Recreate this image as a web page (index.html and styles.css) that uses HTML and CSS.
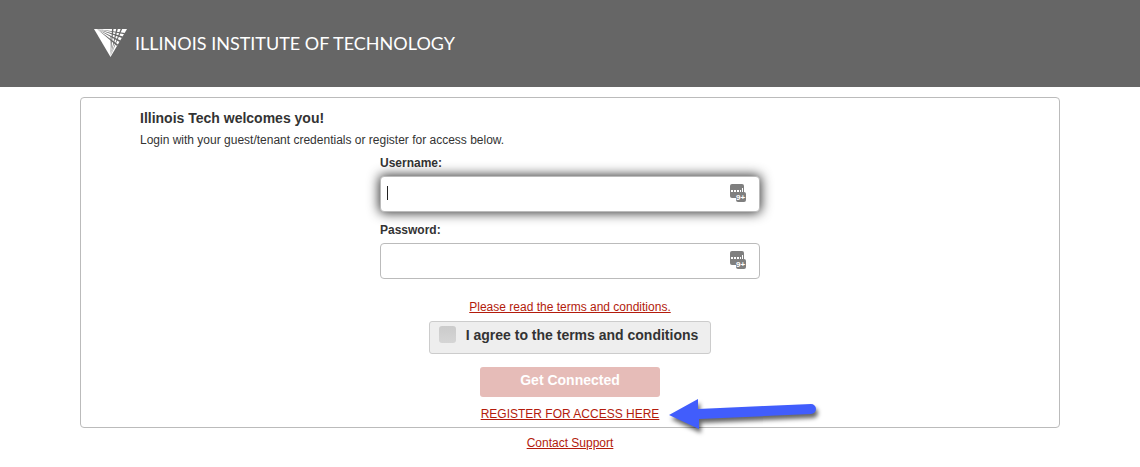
FILE: index.html
```
<!DOCTYPE html>
<html lang="en">
<head>
    <meta charset="UTF-8">
    <meta name="viewport" content="width=device-width, initial-scale=1.0">
    <title>Illinois Tech - Guest Login</title>
    <link rel="stylesheet" href="styles.css">
</head>
<body>
    <header class="header">
        <div class="logo">
            <svg class="logo-mark" width="34" height="28" viewBox="0 0 34 28" aria-hidden="true">
                <path fill="#fff" d="M0 0H33L16.500 28Z"/>
                <g fill="#666">
                    <path d="M3 0L31 4L30.500 5.200Z"/>
                    <path d="M3 0L29 7.600L28 9Z"/>
                    <path d="M3 0L26.500 11.500L25.600 13Z"/>
                    <path d="M3 0L24 15.500L23 17Z"/>
                    <path d="M16.500 27L18 0H19.500Z"/>
                    <path d="M16.500 27L22.200 0H23.800Z"/>
                    <path d="M16.500 27L26.600 0H28.200Z"/>
                    <path d="M16.500 27L16 7L17 7Z" opacity="0.5"/>
                </g>
            </svg>
            <span class="logo-text">ILLINOIS INSTITUTE OF TECHNOLOGY</span>
        </div>
    </header>

    <main class="panel">
        <h1>Illinois Tech welcomes you!</h1>
        <p class="intro">Login with your guest/tenant credentials or register for access below.</p>

        <form class="login-form" id="loginForm">
            <div class="input-group">
                <label for="username">Username:</label>
                <div class="input-wrap">
                    <input type="text" id="username" name="username" placeholder=" " autofocus>
                    <span class="caret"></span>
                    <svg class="manager-icon" width="18" height="18" viewBox="0 0 18 18" aria-hidden="true">
                        <rect width="14" height="14" rx="2" fill="#7f7f7f"/>
                        <rect x="6" y="8" width="10" height="10" rx="2" fill="#7f7f7f"/>
                        <path fill="#fff" d="M1 6h2v2H1zM4 6h2v2H4zM7 6h2v2H7zM10 6h1v2h-1zM12 4h1v4h-1z"/>
                        <text x="6" y="16" class="manager-count">9+</text>
                    </svg>
                </div>
            </div>
            <div class="input-group">
                <label for="password">Password:</label>
                <div class="input-wrap">
                    <input type="password" id="password" name="password">
                    <svg class="manager-icon" width="18" height="18" viewBox="0 0 18 18" aria-hidden="true">
                        <rect width="14" height="14" rx="2" fill="#7f7f7f"/>
                        <rect x="6" y="8" width="10" height="10" rx="2" fill="#7f7f7f"/>
                        <path fill="#fff" d="M1 6h2v2H1zM4 6h2v2H4zM7 6h2v2H7zM10 6h1v2h-1zM12 4h1v4h-1z"/>
                        <text x="6" y="16" class="manager-count">9+</text>
                    </svg>
                </div>
            </div>

            <a class="terms-link" href="#">Please read the terms and conditions.</a>
            <label class="agree" for="agree">
                <input type="checkbox" id="agree" name="agree">
                <span>I agree to the terms and conditions</span>
            </label>
            <button type="submit" class="connect-btn" disabled>Get Connected</button>
            <div class="register">
                <a href="#">REGISTER FOR ACCESS HERE</a>
                <svg class="arrow" width="160" height="44" viewBox="0 0 160 44" aria-hidden="true">
                    <path fill="#415dfc" d="M0 20L29 4V14L142 9A5 5 0 0 1 142 19L30 24V34Z"/>
                </svg>
            </div>
        </form>
    </main>

    <footer class="footer">
        <a href="#">Contact Support</a>
    </footer>
</body>
</html>
```
FILE: styles.css
```
* {
    margin: 0;
    padding: 0;
    box-sizing: border-box;
}

body {
    background-color: #fff;
    color: #333;
    font-family: 'Liberation Sans', Arial, sans-serif;
    font-size: 12px;
    line-height: 16px;
}

a {
    color: #b31b0c;
}

.header {
    background-color: #666;
    padding: 28px 0 30px;
}

.logo {
    display: flex;
    align-items: center;
    gap: 7px;
    max-width: 980px;
    margin: 0 auto;
    padding-left: 14px;
    height: 29px;
}

.logo-mark {
    flex: none;
}

.logo-text {
    color: #fff;
    font-family: Lato, sans-serif;
    font-size: 18px;
    line-height: 20px;
    white-space: nowrap;
}

.panel {
    max-width: 980px;
    margin: 10px auto 0;
    padding: 12px 59px 5px;
    border: 1px solid #bbb;
    border-radius: 4px;
}

h1 {
    font-size: 14px;
    line-height: 16px;
    margin-bottom: 6px;
}

.login-form {
    display: flex;
    flex-direction: column;
    align-items: center;
    max-width: 380px;
    margin: 7px auto 0;
}

.input-group {
    width: 100%;
    margin-bottom: 10px;
}

.input-group label {
    display: block;
    font-weight: bold;
    margin-bottom: 5px;
}

.input-wrap {
    position: relative;
}

.input-wrap input {
    display: block;
    width: 100%;
    height: 36px;
    padding: 0 36px 2px 7px;
    border: 1px solid #bbb;
    border-radius: 4px;
    background-color: #fff;
    color: #333;
    font-family: inherit;
    font-size: 14px;
}

.input-wrap input:focus {
    outline: none;
    box-shadow: 0 0 12px 1px #333;
}

.input-wrap input:placeholder-shown {
    caret-color: transparent;
}

.caret {
    display: none;
    position: absolute;
    top: 10px;
    left: 7px;
    width: 1px;
    height: 14px;
    background-color: #222;
    pointer-events: none;
}

.input-wrap input:focus:placeholder-shown + .caret {
    display: block;
}

.manager-icon {
    position: absolute;
    top: 8px;
    right: 12px;
}

.manager-count {
    fill: #fff;
    font-size: 8px;
    font-weight: bold;
}

.terms-link {
    margin-top: 10px;
}

.agree {
    display: flex;
    gap: 10px;
    margin-top: 6px;
    padding: 4px 12px 4px 9px;
    height: 33px;
    border: 1px solid #ccc;
    border-radius: 3px;
    background-color: #eee;
    font-size: 14px;
    font-weight: bold;
    line-height: 18px;
    white-space: nowrap;
}

.agree input {
    appearance: none;
    width: 17px;
    height: 17px;
    border-radius: 3px;
    background-image: linear-gradient(#cbcbcb, #d5d5d5);
}

.connect-btn {
    width: 180px;
    height: 30px;
    margin-top: 13px;
    padding-bottom: 4px;
    border: none;
    border-radius: 3px;
    background-color: #e6bcb8;
    color: #fff;
    font-family: inherit;
    font-size: 14px;
    font-weight: bold;
}

.register {
    position: relative;
    margin-top: 9px;
}

.arrow {
    position: absolute;
    top: -11px;
    left: calc(100% + 10px);
    filter: drop-shadow(2px 4px 2px rgba(0, 0, 0, 0.6));
}

.footer {
    margin-top: 7px;
    text-align: center;
}

@media (max-width: 600px) {
    .panel {
        margin: 10px 10px 0;
        padding: 12px 15px 5px;
    }

    .arrow {
        display: none;
    }
}
```
